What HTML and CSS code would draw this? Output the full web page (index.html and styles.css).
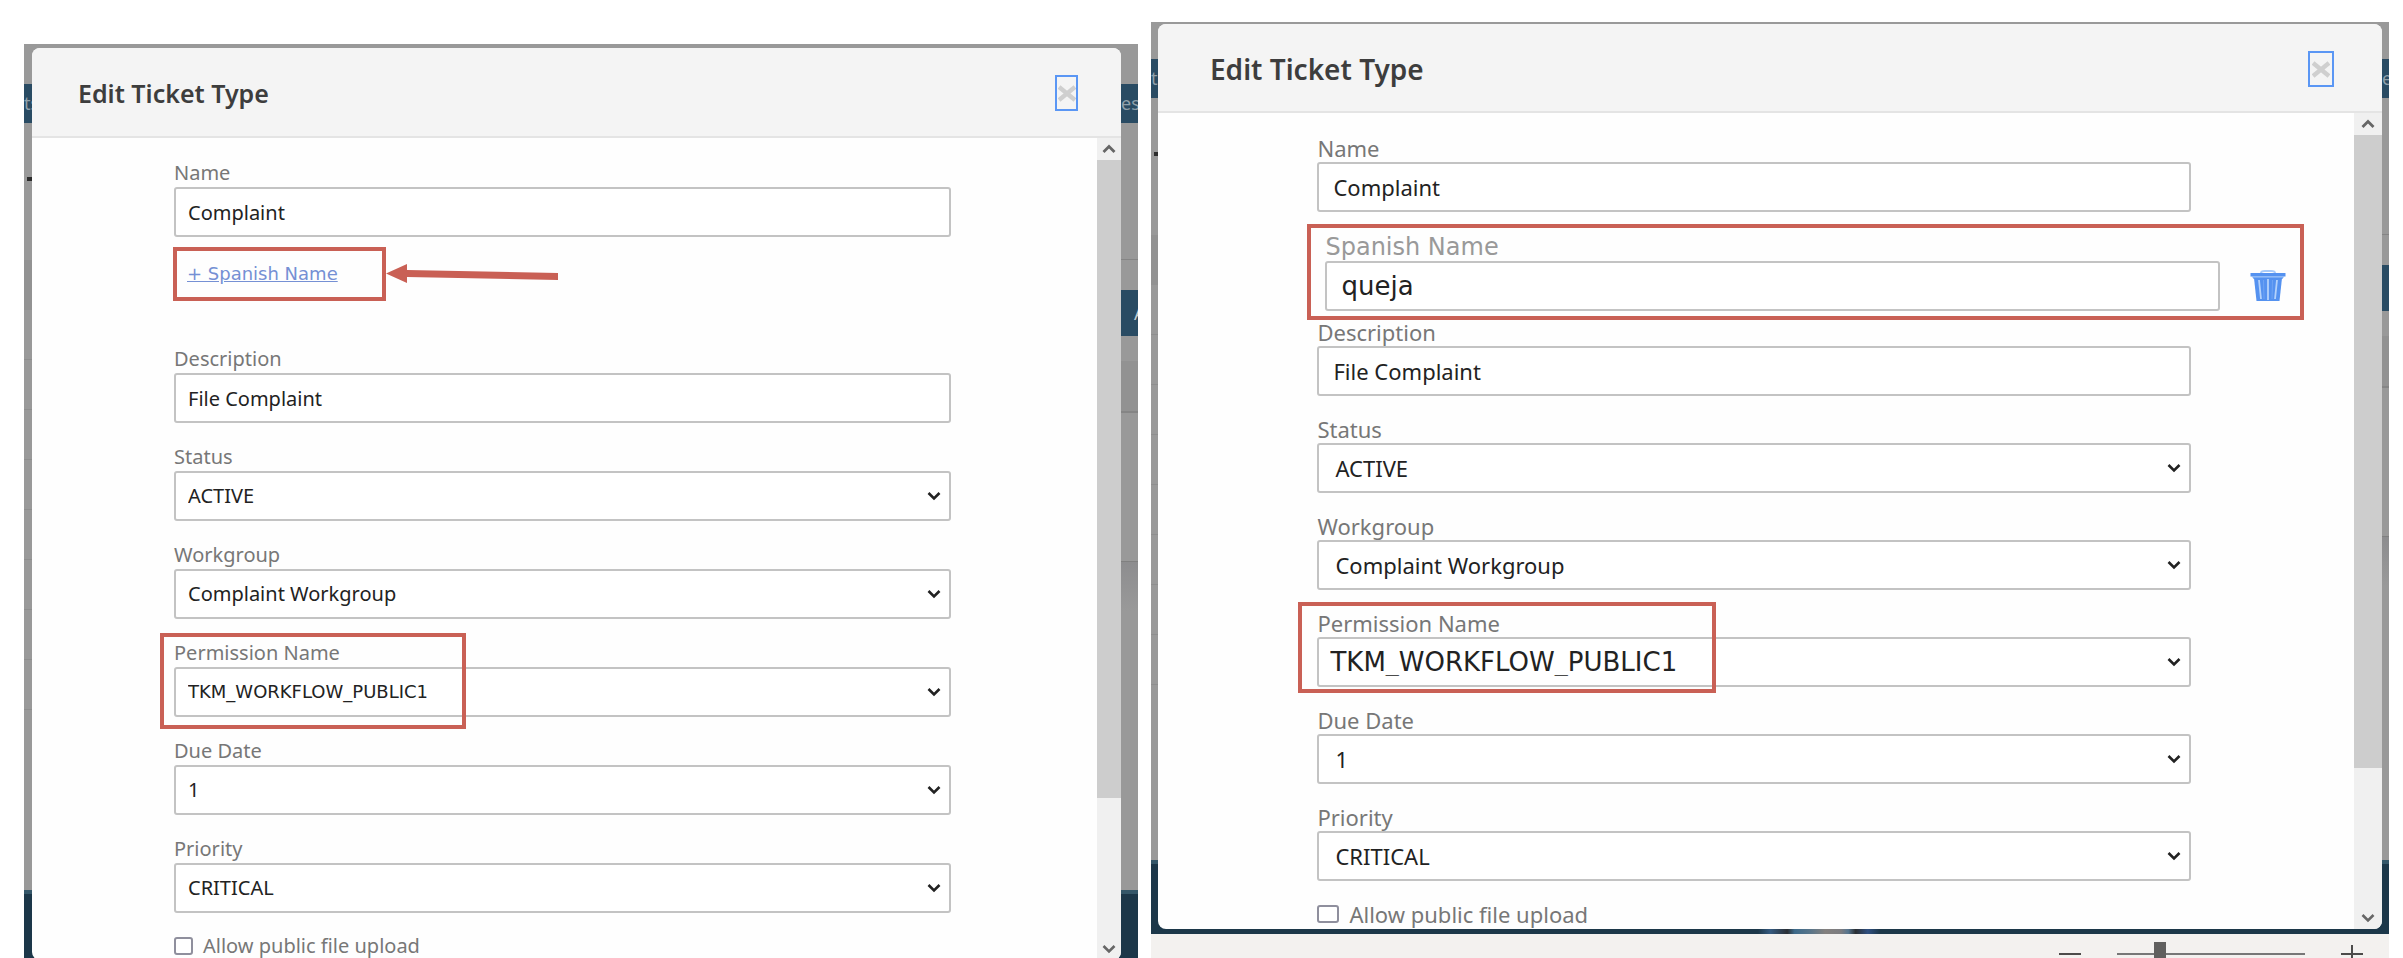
FILE: index.html
```html
<!DOCTYPE html>
<html lang="en">
<head>
<meta charset="utf-8">
<title>Edit Ticket Type</title>
<link rel="stylesheet" href="styles.css">
</head>
<body>
<svg class="sprite" aria-hidden="true">
  <symbol id="chevron-down" viewBox="0 0 14 10"><path d="M1.5 2 L7 7.5 L12.5 2" fill="none" stroke="currentColor" stroke-width="2.6"/></symbol>
  <symbol id="chevron-up" viewBox="0 0 14 10"><path d="M1.5 8 L7 2.5 L12.5 8" fill="none" stroke="currentColor" stroke-width="2.8"/></symbol>
  <symbol id="cross" viewBox="0 0 18 18"><path d="M1 3 L17 16 M17 3 L1 16" fill="none" stroke="currentColor" stroke-width="4.5"/></symbol>
  <symbol id="trash" viewBox="0 0 36 32">
    <path d="M11 3 C11 1 13 1 15 1 H21 C23 1 25 1 25 3" fill="none" stroke="#a9cbfa" stroke-width="2"/>
    <path d="M0.500 3 H35.500 V6.500 H0.500 Z" fill="#5592f0"/>
    <path d="M2 6.500 H34 L32.500 9 H3.500 Z" fill="#78abf6"/>
    <path d="M4 8 H32 L29.500 31 H6.500 Z" fill="#5592f0"/>
    <path d="M9 10 L11 29 M18 9 V30 M27 10 L25 29" stroke="#b4d2fb" stroke-width="1.800" fill="none"/>
    <path d="M13.500 10 L14 29 M22.500 10 L22 29" stroke="#6fa4f4" stroke-width="1" fill="none"/>
  </symbol>
</svg>
<main class="compare">

  <section class="screen screen-add">
    <div class="page-behind" aria-hidden="true">
      <div class="edge edge-left">
        <span class="nav-slice">ts</span><span class="heading-slice"></span><span class="rows-slice"></span>
      </div>
      <div class="edge edge-right">
        <span class="nav-slice">es</span><span class="rule-slice"></span><span class="button-slice">A</span><span class="band-slice"></span><span class="panel-slice"></span>
      </div>
      <div class="footer-slice"></div>
    </div>
    <div class="dialog" role="dialog" aria-labelledby="title-a">
      <header class="dialog-head">
        <h2 id="title-a">Edit Ticket Type</h2>
        <button class="close" type="button" aria-label="Close"><svg><use href="#cross"/></svg></button>
      </header>
      <div class="dialog-body">
        <form class="form">
          <div class="field"><label for="a-name">Name</label><input class="control" id="a-name" type="text" value="Complaint"></div>
          <div class="add-row">
            <div class="callout"><a href="#a-name">+ Spanish Name</a></div>
            <svg class="arrow" viewBox="0 0 172 20" aria-hidden="true"><path d="M0 9.500 L21 0 V6 L172 9 V16 L21 13 V19 Z" fill="#c96055"/></svg>
          </div>
          <div class="field"><label for="a-desc">Description</label><input class="control" id="a-desc" type="text" value="File Complaint"></div>
          <div class="field"><label for="a-status">Status</label><div class="select"><select class="control" id="a-status"><option>ACTIVE</option></select><svg><use href="#chevron-down"/></svg></div></div>
          <div class="field"><label for="a-group">Workgroup</label><div class="select"><select class="control" id="a-group"><option>Complaint Workgroup</option></select><svg><use href="#chevron-down"/></svg></div></div>
          <div class="field permission"><label for="a-perm">Permission Name</label><div class="select"><select class="control" id="a-perm"><option>TKM_WORKFLOW_PUBLIC1</option></select><svg><use href="#chevron-down"/></svg></div></div>
          <div class="field"><label for="a-due">Due Date</label><div class="select"><select class="control" id="a-due"><option>1</option></select><svg><use href="#chevron-down"/></svg></div></div>
          <div class="field"><label for="a-prio">Priority</label><div class="select"><select class="control" id="a-prio"><option>CRITICAL</option></select><svg><use href="#chevron-down"/></svg></div></div>
          <div class="check"><input type="checkbox" id="a-upload"><label for="a-upload">Allow public file upload</label></div>
        </form>
        <div class="scrollbar" aria-hidden="true">
          <span class="scroll-end"><svg><use href="#chevron-up"/></svg></span><span class="thumb"></span><span class="track"></span><span class="scroll-end"><svg><use href="#chevron-down"/></svg></span>
        </div>
      </div>
    </div>
  </section>

  <section class="screen screen-filled">
    <div class="viewport">
      <div class="page-behind" aria-hidden="true">
        <div class="edge edge-left">
          <span class="nav-slice">ts</span><span class="heading-slice"></span><span class="rows-slice"></span>
        </div>
        <div class="edge edge-right">
          <span class="nav-slice">e</span><span class="rule-slice"></span><span class="button-slice"></span><span class="band-slice"></span><span class="panel-slice"></span>
        </div>
        <div class="footer-slice"><span class="footer-art"></span></div>
      </div>
      <div class="dialog" role="dialog" aria-labelledby="title-b">
        <header class="dialog-head">
          <h2 id="title-b">Edit Ticket Type</h2>
          <button class="close" type="button" aria-label="Close"><svg><use href="#cross"/></svg></button>
        </header>
        <div class="dialog-body">
          <form class="form">
            <div class="field"><label for="b-name">Name</label><input class="control" id="b-name" type="text" value="Complaint"></div>
            <div class="field translation">
              <label for="b-spanish">Spanish Name</label>
              <div class="translation-row">
                <input class="control" id="b-spanish" type="text" value="queja">
                <button class="delete" type="button" aria-label="Delete Spanish name"><svg><use href="#trash"/></svg></button>
              </div>
            </div>
            <div class="field after-translation"><label for="b-desc">Description</label><input class="control" id="b-desc" type="text" value="File Complaint"></div>
            <div class="field"><label for="b-status">Status</label><div class="select"><select class="control" id="b-status"><option>ACTIVE</option></select><svg><use href="#chevron-down"/></svg></div></div>
            <div class="field"><label for="b-group">Workgroup</label><div class="select"><select class="control" id="b-group"><option>Complaint Workgroup</option></select><svg><use href="#chevron-down"/></svg></div></div>
            <div class="field permission"><label for="b-perm">Permission Name</label><div class="select"><select class="control" id="b-perm"><option>TKM_WORKFLOW_PUBLIC1</option></select><svg><use href="#chevron-down"/></svg></div></div>
            <div class="field"><label for="b-due">Due Date</label><div class="select"><select class="control" id="b-due"><option>1</option></select><svg><use href="#chevron-down"/></svg></div></div>
            <div class="field"><label for="b-prio">Priority</label><div class="select"><select class="control" id="b-prio"><option>CRITICAL</option></select><svg><use href="#chevron-down"/></svg></div></div>
            <div class="check"><input type="checkbox" id="b-upload"><label for="b-upload">Allow public file upload</label></div>
          </form>
          <div class="scrollbar" aria-hidden="true">
            <span class="scroll-end"><svg><use href="#chevron-up"/></svg></span><span class="thumb"></span><span class="track"></span><span class="scroll-end"><svg><use href="#chevron-down"/></svg></span>
          </div>
        </div>
      </div>
    </div>
    <div class="zoom-bar">
      <button class="step" type="button" aria-label="Zoom out"><svg viewBox="0 0 22 22"><path d="M0 11 H22" stroke="#4c4b4a" stroke-width="2"/></svg></button>
      <input class="zoom" type="range" min="0" max="100" value="21" aria-label="Zoom">
      <button class="step" type="button" aria-label="Zoom in"><svg viewBox="0 0 22 22"><path d="M0 11 H22 M11 2 V20" stroke="#4c4b4a" stroke-width="2"/></svg></button>
    </div>
  </section>

</main>
</body>
</html>
```

FILE: styles.css
```css
*, *::before, *::after { box-sizing: border-box; }

body {
  margin: 0;
  background: #fff;
  font-family: "Noto Sans", "Open Sans", sans-serif;
  overflow: hidden;
}

.sprite { position: absolute; width: 0; height: 0; }

.compare {
  display: grid;
  grid-template-columns: 1114fr 1238fr;
  gap: 13px;
  padding: 0 14px 0 24px;
  height: 100vh;
  overflow: hidden;
}

/* Screens */
.screen {
  --gap: 20px;
  --text: 20px;
  --code-text: 18px;
  --title: 25px;
  --bar: 24px;
  --slice-start: 40px;
  min-width: 0;
}
.screen-add {
  position: relative;
  display: flex;
  flex-direction: column;
  margin-top: 44px;
  padding: 4px 17px 0 8px;
  overflow: hidden;
}
.screen-filled {
  --gap: 19px;
  --text: 22px;
  --code-text: 26px;
  --title: 28px;
  --bar: 28px;
  --slice-start: 37px;
  display: flex;
  flex-direction: column;
  margin-top: 22px;
}
.viewport {
  position: relative;
  flex: 1;
  display: flex;
  flex-direction: column;
  min-height: 0;
  padding: 2px 7px 5px;
}

/* Dimmed page that shows round the dialog */
.page-behind {
  position: absolute;
  inset: 0;
  z-index: -1;
  display: grid;
  grid-template: 1fr auto / 1fr 1fr;
  overflow: hidden;
  background: #999;
}
.edge {
  display: flex;
  flex-direction: column;
  width: 17px;
  min-height: 0;
  padding-top: var(--slice-start);
  overflow: hidden;
}
.edge-right { justify-self: end; }
.screen-filled .edge { width: 7px; }
.nav-slice {
  flex: none;
  height: 39px;
  background: #294b63;
  color: #8fa0ab;
  font-size: 18px;
  line-height: 39px;
}
.heading-slice {
  flex: none;
  width: 5px;
  height: 4px;
  margin: 54px 0 79px 3px;
  background: #2c2c2c;
}
.rows-slice {
  flex: none;
  height: 452px;
  background:
    linear-gradient(#929292, #929292) 0 0 / 100% 50px no-repeat,
    repeating-linear-gradient(#999 0 49px, #8e8e8e 49px 50px);
}
.rule-slice {
  flex: none;
  height: 31px;
  margin-top: 136px;
  border-top: 1px solid #858585;
}
.button-slice {
  flex: none;
  height: 46px;
  padding-left: 13px;
  background: #294b63;
  color: #c2ccd2;
  font-size: 18px;
  line-height: 46px;
}
.band-slice {
  flex: none;
  height: 52px;
  margin-top: 25px;
  border-bottom: 2px solid #858585;
  background: #929292;
}
.panel-slice {
  flex: none;
  height: 50px;
  margin-top: 148px;
  border-top: 1px solid #808080;
  background: linear-gradient(#8d8d8f, #999);
}
.footer-slice {
  grid-column: 1 / -1;
  display: flex;
  align-items: flex-end;
  justify-content: center;
  height: 68px;
  border-top: 4px solid #355769;
  background: #1c3749;
}
.screen-filled .footer-slice { height: 74px; }
.footer-art {
  width: 122px;
  height: 5px;
  margin-left: 98px;
  background: linear-gradient(90deg, #1c3749, #355a80 10%, #2a2f35 24%, #3d6a8a 30%, #56748a 42%, #83807e 55%, #7c7c80 68%, #55748e 74%, #2b2f33 80%, #2f4f80 90%, #1c3749);
}

/* Dialog */
.dialog {
  flex: 1;
  display: flex;
  flex-direction: column;
  min-height: 0;
  border-radius: 8px;
  background: #fefefe;
  overflow: hidden;
}
.screen-add .dialog { margin-bottom: -2px; }
.dialog-head {
  flex: none;
  display: flex;
  align-items: center;
  justify-content: space-between;
  height: 90px;
  padding: 2px 43px 0 46px;
  border-bottom: 2px solid #e4e4e4;
  background: #f4f4f4;
}
.screen-filled .dialog-head {
  height: 89px;
  padding: 2px 48px 0 52px;
}
.dialog-head h2 {
  margin: 0;
  color: #3d3d3d;
  font-size: var(--title);
  font-weight: 600;
  line-height: 36px;
}
.close {
  display: grid;
  place-items: center;
  width: 23px;
  height: 36px;
  padding: 0;
  border: 2px solid #5a96f4;
  background: none;
  color: #cfcfcf;
}
.screen-filled .close { width: 26px; }
.close svg { width: 18px; height: 18px; }

.dialog-body {
  flex: 1;
  display: flex;
  min-height: 0;
}
.form {
  flex: 1;
  display: grid;
  grid-template-columns: 40fr 219fr 41fr;
  align-content: start;
  padding-top: 21px;
}
.form > * { grid-column: 2; }

/* Fields */
.field {
  position: relative;
  margin-top: var(--gap);
}
.field:first-child { margin-top: 0; }
.field label {
  display: block;
  color: #777;
  font-size: var(--text);
  line-height: 28px;
}
.control {
  display: block;
  width: 100%;
  height: 50px;
  margin: 0;
  padding: 0 14px 0 12px;
  border: 2px solid #c3c3c3;
  border-radius: 3px;
  background: #fff;
  color: #222;
  font-family: inherit;
  font-size: var(--text);
  line-height: 28px;
}
.screen-filled .control { padding-left: 14px; }
select.control { appearance: none; }
.screen-filled select.control { padding-left: 16px; }
.select {
  display: grid;
  align-items: center;
}
.select > * { grid-area: 1 / 1; }
.select svg {
  justify-self: end;
  width: 14px;
  height: 10px;
  margin-right: 10px;
  color: #222;
  pointer-events: none;
}
.permission .control {
  font-family: "DejaVu Sans", sans-serif;
  font-size: var(--code-text);
}
.screen-filled .permission .control { padding-left: 11px; }

/* Red highlights */
.permission::after,
.translation::after {
  content: "";
  position: absolute;
  inset: -6px auto -12px -14px;
  width: 306px;
  border: 4px solid #c96055;
  pointer-events: none;
}
.screen-filled .permission::after {
  inset: -7px auto -6px -19px;
  width: 418px;
}
.add-row {
  display: flex;
  align-items: center;
  margin: 10px 0 24px -1px;
}
.callout {
  display: flex;
  align-items: center;
  width: 213px;
  height: 54px;
  padding-left: 10px;
  border: 4px solid #c96055;
}
.callout a {
  color: #7590d4;
  font-family: "DejaVu Sans", sans-serif;
  font-size: 18px;
  line-height: 24px;
}
.arrow { width: 172px; height: 20px; }

.form .translation { margin: 21px -95px 0 8px; }
.translation::after {
  inset: -9px -18px;
  width: auto;
}
.translation label {
  color: #999;
  font-family: "DejaVu Sans", sans-serif;
  font-size: 24px;
}
.translation-row {
  display: flex;
  align-items: center;
  gap: 30px;
}
.translation .control {
  flex: 1;
  font-family: "DejaVu Sans", sans-serif;
  font-size: 26px;
}
.delete {
  width: 36px;
  height: 32px;
  padding: 0;
  border: 0;
  background: none;
}
.delete svg { display: block; width: 36px; height: 32px; }
.form .after-translation { margin-top: 7px; }

.check {
  display: flex;
  align-items: center;
  gap: 10px;
  height: 28px;
  margin-top: 19px;
  color: #777;
  font-size: var(--text);
  line-height: 28px;
}
.check input {
  appearance: none;
  width: 19px;
  height: 18px;
  margin: 0;
  border: 2px solid #8f8f9d;
  border-radius: 3px;
  background: #fff;
}
.screen-filled .check input { width: 22px; }

/* Scroll bar */
.scrollbar {
  flex: none;
  display: flex;
  flex-direction: column;
  width: var(--bar);
  background: #f0f0f0;
}
.scroll-end {
  flex: none;
  display: grid;
  place-items: center;
  height: 22px;
  color: #666;
}
.scroll-end svg { width: 14px; height: 10px; }
.thumb { flex: 638; background: #cdcdcd; }
.track { flex: 140; }

/* Zoom bar */
.zoom-bar {
  flex: none;
  display: flex;
  align-items: center;
  justify-content: flex-end;
  gap: 36px;
  height: 24px;
  padding: 16px 26px 0 0;
  background: #f3f1ef;
}
.step {
  width: 22px;
  height: 22px;
  padding: 0;
  border: 0;
  background: none;
}
.step svg { display: block; width: 22px; height: 22px; }
.zoom {
  appearance: none;
  width: 188px;
  height: 24px;
  margin: 0;
  background: linear-gradient(#777, #777) 0 50% / 100% 2px no-repeat;
}
.zoom::-webkit-slider-thumb {
  appearance: none;
  width: 12px;
  height: 24px;
  background: #605f5e;
}
```
